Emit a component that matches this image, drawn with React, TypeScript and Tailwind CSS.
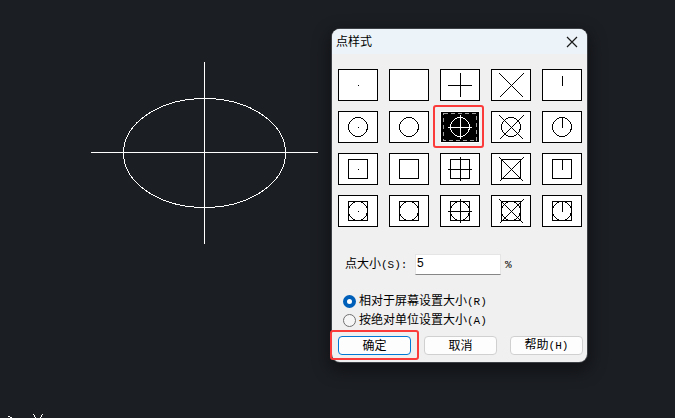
import { useState } from "react";

type Part = "dot" | "plus" | "cross" | "tick" | "circle" | "square";

const marks: Part[][] = [["dot"], [], ["plus"], ["cross"], ["tick"]];

const frames: Part[][] = [[], ["circle"], ["square"], ["circle", "square"]];

const pointStyles = frames.flatMap((frame, row) =>
  marks.map((mark, col) => ({
    id: row * 5 + col,
    parts: [...mark, ...frame],
  })),
);

function PointIcon({ parts, active }: { parts: Part[]; active: boolean }) {
  const has = (part: Part) => parts.includes(part);

  return (
    <svg
      viewBox="0 0 38 30"
      className="block h-[30px] w-[38px]"
      fill="none"
      stroke="currentColor"
      shapeRendering="crispEdges"
      aria-hidden="true"
    >
      {has("dot") && <path d="M19 15.5h1" />}
      {has("plus") && <path d="M7 15.5h24M19.5 3v24" />}
      {has("cross") && <path d="M7.5 3.5l24 24M31.5 3.5l-24 24" />}
      {has("tick") && <path d="M19.5 6v10" />}
      {has("circle") && <circle cx="19" cy="15" r="9.5" />}
      {has("square") && <rect x="9.5" y="5.5" width="19" height="19" />}
      {active && (
        <rect
          x="2.5"
          y="1.5"
          width="33"
          height="27"
          stroke="#a3a3a3"
          strokeDasharray="4 3"
        />
      )}
    </svg>
  );
}

function Drawing() {
  return (
    <>
      <svg
        className="absolute left-0 top-0 h-[260px] w-[330px]"
        viewBox="0 0 330 260"
        fill="none"
        stroke="white"
        shapeRendering="crispEdges"
        aria-hidden="true"
      >
        <path d="M91 152.5h227M204.5 62v182" />
        <ellipse cx="204.5" cy="153" rx="81" ry="54.5" />
      </svg>
      {/* UCS axis marks */}
      <svg
        className="absolute bottom-0 left-0 h-[6px] w-[50px]"
        viewBox="0 0 50 6"
        fill="none"
        stroke="white"
        shapeRendering="crispEdges"
        aria-hidden="true"
      >
        <path d="M8 4.5h2M10 5.5h2M33 2.5h1M34 3.5h1M34 4.5h1M35 5.5h1M42 2.5h1M41 3.5h1M41 4.5h1M40 5.5h1" />
      </svg>
    </>
  );
}

function Latin({ children }: { children: string }) {
  return (
    <span className="font-['Liberation_Mono',monospace] text-[11px]">
      {children}
    </span>
  );
}

const units = [
  { id: "relative", label: "相对于屏幕设置大小", hotkey: "(R)" },
  { id: "absolute", label: "按绝对单位设置大小", hotkey: "(A)" },
];

export default function App() {
  const [selected, setSelected] = useState(7);
  const [size, setSize] = useState("5");
  const [unit, setUnit] = useState("relative");

  return (
    <main className="relative flex min-h-screen items-start justify-end overflow-hidden bg-[#1b1e23] pr-[88px] pt-[29px] font-['Liberation_Sans','Noto_Sans_CJK_SC',sans-serif] text-xs text-black">
      <Drawing />

      <section
        role="dialog"
        aria-labelledby="title"
        className="relative w-[255px] rounded-lg bg-[#f0f0f0] shadow-[0_0_0_1px_#3d4146,0_6px_16px_4px_#00000066]"
      >
        <header className="flex h-[25px] items-center justify-between rounded-t-lg bg-[#ecf4f9] pl-1 pr-2">
          <h1 id="title">点样式</h1>
          <button type="button" aria-label="关闭" className="p-px">
            <svg
              viewBox="0 0 12 12"
              className="block size-3"
              stroke="#1a1a1a"
              aria-hidden="true"
            >
              <path d="M1 1l10 10M11 1L1 11" strokeWidth="1.2" />
            </svg>
          </button>
        </header>

        <form
          className="pb-[7px] pl-[6px] pr-1 pt-[15px]"
          onSubmit={(e) => e.preventDefault()}
        >
          <div className="grid grid-cols-[repeat(5,40px)] gap-x-[11px] gap-y-[10px]">
            {pointStyles.map(({ id, parts }) => (
              <button
                key={id}
                type="button"
                aria-label={`${id}`}
                aria-pressed={id === selected}
                onClick={() => setSelected(id)}
                className={
                  id === selected
                    ? "relative h-8 border border-white bg-black text-white"
                    : "relative h-8 border border-black bg-white text-black"
                }
              >
                <PointIcon parts={parts} active={id === selected} />
                {id === selected && (
                  <span className="pointer-events-none absolute -bottom-[6px] -left-2 -right-[5px] -top-[7px] rounded-[3px] border-2 border-[#fb3b3a]" />
                )}
              </button>
            ))}
          </div>

          <div className="mt-[27px] flex items-center pl-[7px]">
            <label htmlFor="size" className="w-[70px]">
              点大小<Latin>(S):</Latin>
            </label>
            <input
              id="size"
              value={size}
              onChange={(e) => setSize(e.target.value)}
              className="h-[21px] w-[86px] border border-[#e5e5e5] border-b-[#868686] bg-white pb-[3px] pl-px outline-none"
            />
            <span className="ml-1">
              <Latin>%</Latin>
            </span>
          </div>

          <div className="mt-[17px] pl-[5px]">
            {units.map(({ id, label, hotkey }) => (
              <label key={id} className="flex h-[19px] items-center gap-[3px]">
                <input
                  type="radio"
                  name="unit"
                  value={id}
                  checked={unit === id}
                  onChange={() => setUnit(id)}
                  className="size-[13px] appearance-none rounded-full border border-[#707070] bg-[#f6f6f6] checked:border-4 checked:border-[#005fb8] checked:bg-white"
                />
                <span>
                  {label}
                  <Latin>{hotkey}</Latin>
                </span>
              </label>
            ))}
          </div>

          <div className="mt-[6px] grid grid-cols-[repeat(3,73px)] justify-between">
            <button
              type="submit"
              className="relative h-[19px] rounded border border-[#0078d4] bg-[#fdfdfd] leading-4"
            >
              确定
              <span className="pointer-events-none absolute -inset-x-[9px] -bottom-[6px] -top-[7px] rounded-[3px] border-2 border-[#fb3b3a]" />
            </button>
            <button
              type="button"
              className="h-[19px] rounded border border-[#d0d0d0] bg-[#fdfdfd] leading-4"
            >
              取消
            </button>
            <button
              type="button"
              className="h-[19px] rounded border border-[#d0d0d0] bg-[#fdfdfd] leading-4"
            >
              帮助<Latin>(H)</Latin>
            </button>
          </div>
        </form>
      </section>
    </main>
  );
}
